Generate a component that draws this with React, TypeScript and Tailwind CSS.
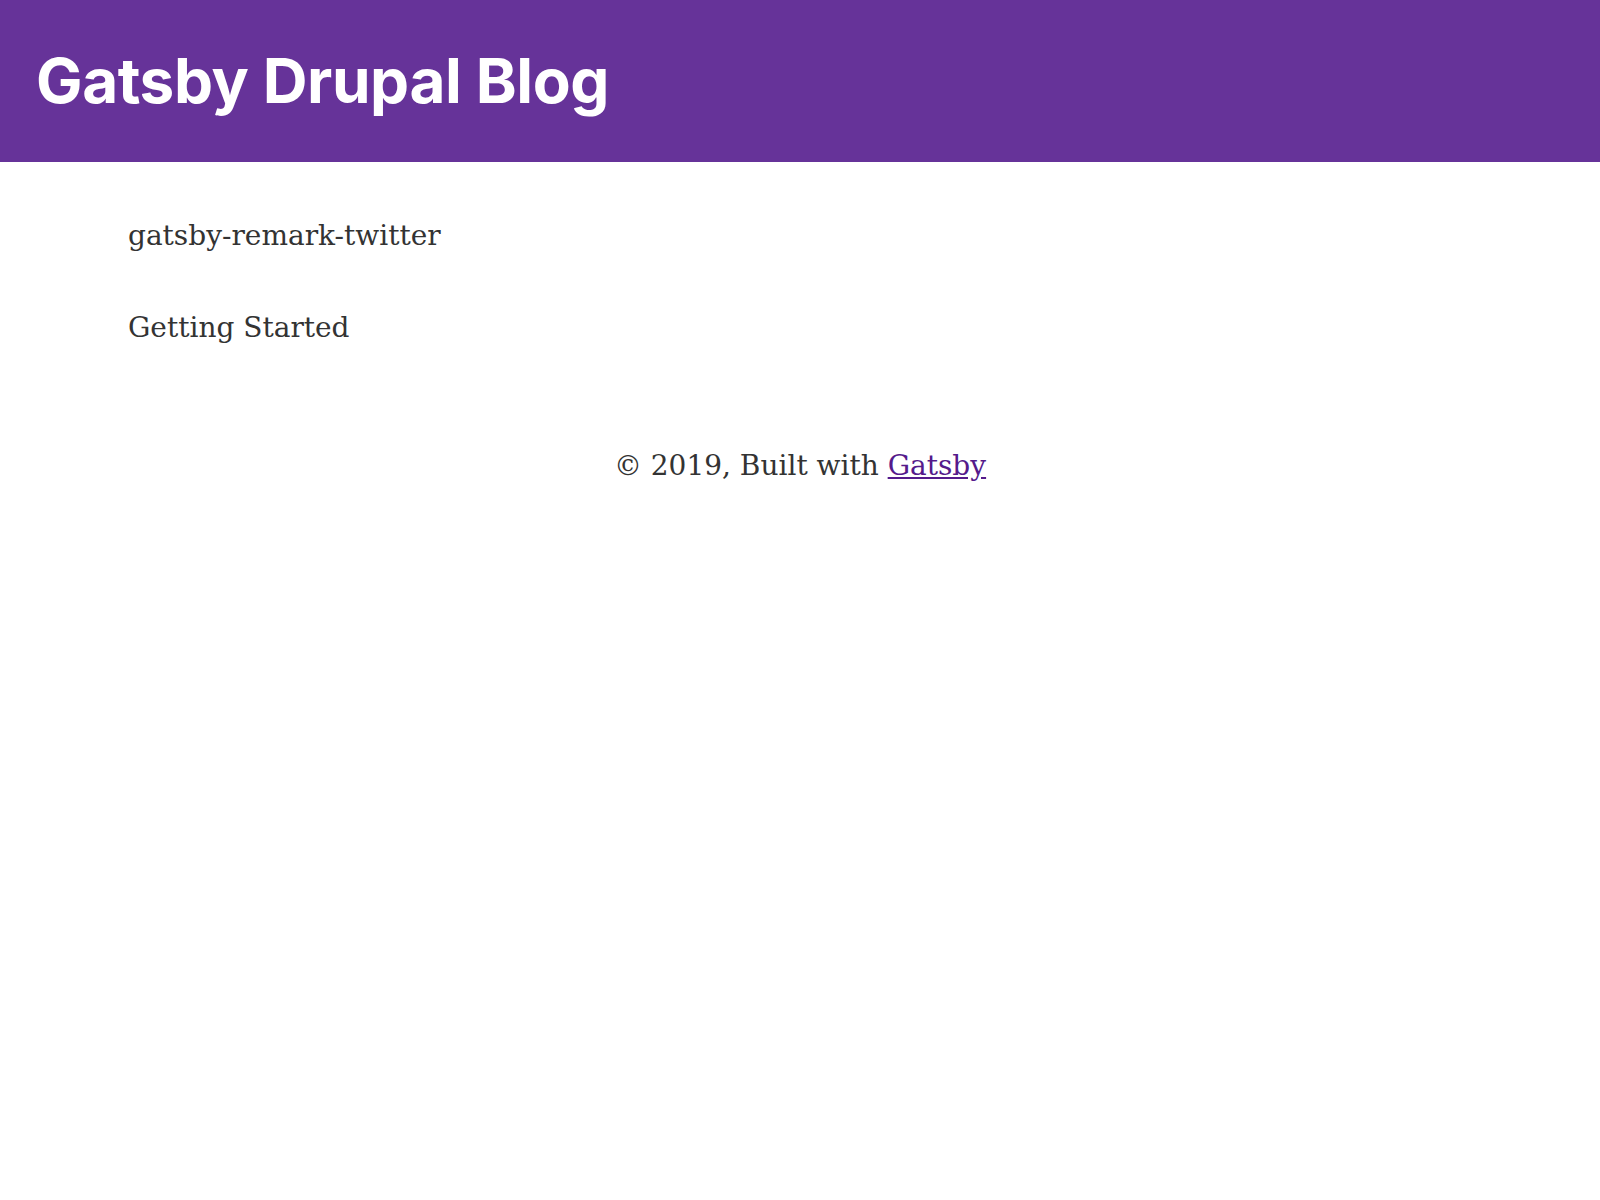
export default function App() {
  const posts = ['gatsby-remark-twitter', 'Getting Started'];

  return (
    <div className="min-h-[1200px] bg-white text-[#333333]" style={{ fontFamily: '"DejaVu Serif", serif' }}>
      <header className="flex h-[162px] items-center bg-[#663399] px-[36px]">
        <h1 className="font-['Inter',sans-serif] text-[62px] font-bold leading-none tracking-[-0.4px] text-white">
          Gatsby Drupal Blog
        </h1>
      </header>

      <main className="px-[128px] pt-[56px]">
        {posts.map((title) => (
          <div key={title} className="mb-[56px] text-[28px] leading-[36px]">
            {title}
          </div>
        ))}
      </main>

      <footer className="pt-[46px] text-center text-[28px] leading-[36px]">
        © 2019, Built with{' '}
        <a href="#" className="text-[#551a8b] underline">
          Gatsby
        </a>
      </footer>
    </div>
  );
}
